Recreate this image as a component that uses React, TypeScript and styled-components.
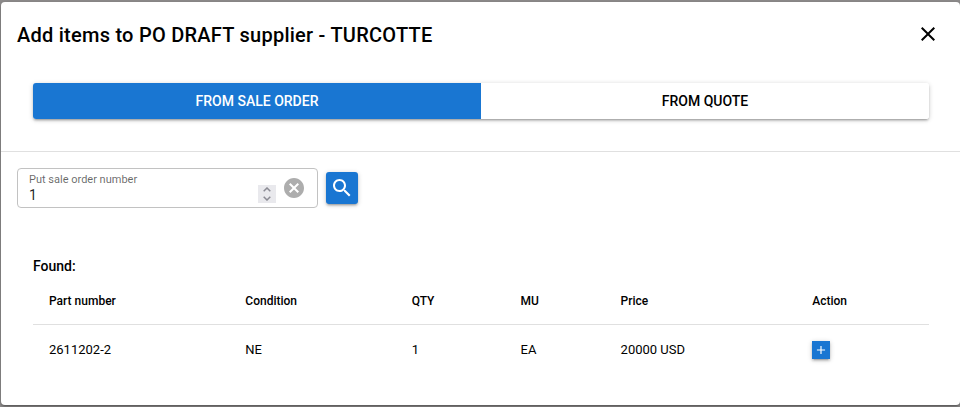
import React, { useRef, useState } from "react";
import styled, { createGlobalStyle } from "styled-components";

const PRIMARY = "#1976d2";
const SHADOW =
  "0 1px 5px rgba(0, 0, 0, 0.2), 0 2px 2px rgba(0, 0, 0, 0.14), 0 3px 1px -2px rgba(0, 0, 0, 0.12)";

const GlobalStyle = createGlobalStyle`
  *, *::before, *::after { box-sizing: border-box; }
  body {
    margin: 0;
    background: #8f8d8d;
    color: #000;
    font-family: Roboto, "Liberation Sans", sans-serif;
    font-size: 14px;
    line-height: 21px;
  }
  button, input { font: inherit; color: inherit; }
  button { border: 0; padding: 0; background: none; cursor: pointer; }
  svg { display: block; }
`;

const Backdrop = styled.div`
  padding: 2px 0 2px 1px;
`;

const Dialog = styled.section`
  background: #fff;
  border-radius: 4px;
  box-shadow: ${SHADOW};
`;

const Header = styled.header`
  display: flex;
  align-items: center;
  justify-content: space-between;
  padding: 16px 20px 16px 16px;
`;

const Title = styled.h1`
  margin: 0;
  padding-top: 2px;
  font-size: 20px;
  font-weight: 500;
  line-height: 30px;
  letter-spacing: 0.0125em;
`;

const CloseButton = styled.button`
  display: grid;
  place-items: center;
  width: 24px;
  height: 24px;
`;

const ToggleSection = styled.div`
  padding: 17px 31px 32px 32px;
  border-bottom: 1px solid #e0e0e0;
`;

const ToggleGroup = styled.div`
  display: flex;
  border-radius: 3px;
  box-shadow: ${SHADOW};
`;

const ToggleButton = styled.button<{ $active: boolean }>`
  flex: 1;
  height: 36px;
  font-weight: 500;
  text-transform: uppercase;
  background: ${({ $active }) => ($active ? PRIMARY : "#fff")};
  color: ${({ $active }) => ($active ? "#fff" : "#000")};

  &:first-child { border-radius: 3px 0 0 3px; }
  &:last-child { border-radius: 0 3px 3px 0; }
`;

const SearchForm = styled.form`
  display: flex;
  align-items: center;
  gap: 8px;
  padding: 16px;
`;

const Field = styled.div`
  display: flex;
  align-items: center;
  width: 301px;
  height: 40px;
  padding: 0 13px 0 11px;
  border: 1px solid #c2c2c2;
  border-radius: 4px;
`;

const FieldText = styled.div`
  flex: 1;
  min-width: 0;
`;

const FieldLabel = styled.label`
  display: block;
  font-size: 11px;
  line-height: 14px;
  color: rgba(0, 0, 0, 0.6);
`;

const NumberInput = styled.input`
  display: block;
  width: 100%;
  height: 16px;
  padding: 0;
  border: 0;
  outline: 0;
  background: none;
  color: rgba(0, 0, 0, 0.87);
  line-height: 16px;
  appearance: textfield;

  &::-webkit-inner-spin-button { appearance: none; margin: 0; }
`;

const Stepper = styled.div`
  display: flex;
  flex-direction: column;
  align-self: flex-end;
  margin: 0 8px 4px 0;
  background: #e9e9ed;
`;

const StepButton = styled.button`
  display: grid;
  place-items: center;
  width: 18px;
  height: 9px;
`;

const ClearButton = styled.button`
  width: 20px;
  height: 20px;
`;

const SearchButton = styled.button`
  display: grid;
  place-items: center;
  width: 32px;
  height: 32px;
  border-radius: 3px;
  background: ${PRIMARY};
  color: #fff;
  box-shadow: ${SHADOW};
`;

const Results = styled.div`
  padding: 32px 31px 31px 32px;
`;

const ResultsTitle = styled.h2`
  margin: 0;
  font-size: 14px;
  font-weight: 500;
  line-height: 20px;
`;

const Table = styled.table`
  width: 100%;
  border-collapse: separate;
  border-spacing: 0;
`;

const HeadCell = styled.th`
  height: 49px;
  padding: 2px 16px 0;
  border-bottom: 1px solid #e0e0e0;
  font-size: 12px;
  font-weight: 500;
  text-align: left;
`;

const Cell = styled.td`
  height: 49px;
  padding: 0 16px;
  font-size: 13px;
`;

const AddButton = styled.button`
  display: grid;
  place-items: center;
  width: 18px;
  height: 18px;
  background: ${PRIMARY};
  color: #fff;
  box-shadow: ${SHADOW};
`;

const columns = ["Part number", "Condition", "QTY", "MU", "Price", "Action"];
const items = [
  { part: "2611202-2", condition: "NE", qty: 1, unit: "EA", price: "20000 USD" },
];
const sources = ["From sale order", "From quote"];

export default function App() {
  const [source, setSource] = useState(sources[0]);
  const [order, setOrder] = useState("1");
  const inputRef = useRef<HTMLInputElement>(null);
  const step = (delta: number) => setOrder(String(Number(order) + delta));

  return (
    <>
      <GlobalStyle />
      <Backdrop>
        <Dialog role="dialog" aria-labelledby="dialog-title">
          <Header>
            <Title id="dialog-title">Add items to PO DRAFT supplier - TURCOTTE</Title>
            <CloseButton type="button" aria-label="Close">
              <svg width="24" height="24" viewBox="0 0 24 24" fill="currentColor">
                <path d="M19 6.41 17.59 5 12 10.59 6.41 5 5 6.41 10.59 12 5 17.59 6.41 19 12 13.41 17.59 19 19 17.59 13.41 12z" />
              </svg>
            </CloseButton>
          </Header>

          <ToggleSection>
            <ToggleGroup role="group" aria-label="Source">
              {sources.map((name) => (
                <ToggleButton
                  key={name}
                  type="button"
                  $active={name === source}
                  aria-pressed={name === source}
                  onClick={() => setSource(name)}
                >
                  {name}
                </ToggleButton>
              ))}
            </ToggleGroup>
          </ToggleSection>

          <SearchForm onSubmit={(event) => event.preventDefault()}>
            <Field>
              <FieldText>
                <FieldLabel htmlFor="order-number">Put sale order number</FieldLabel>
                <NumberInput
                  id="order-number"
                  ref={inputRef}
                  type="number"
                  value={order}
                  onChange={(event) => setOrder(event.target.value)}
                />
              </FieldText>
              <Stepper>
                <StepButton type="button" aria-label="Increase" onClick={() => step(1)}>
                  <svg width="8" height="5" viewBox="0 0 8 5" fill="none" stroke="#8b8b94" strokeWidth="1.5">
                    <path d="M.7 4.3 4 1l3.3 3.3" />
                  </svg>
                </StepButton>
                <StepButton type="button" aria-label="Decrease" onClick={() => step(-1)}>
                  <svg width="8" height="5" viewBox="0 0 8 5" fill="none" stroke="#8b8b94" strokeWidth="1.5">
                    <path d="M.7.7 4 4 7.3.7" />
                  </svg>
                </StepButton>
              </Stepper>
              <ClearButton
                type="button"
                aria-label="Clear"
                onClick={() => {
                  setOrder("");
                  inputRef.current?.focus();
                }}
              >
                <svg width="20" height="20" viewBox="2 2 20 20" fill="#adadad">
                  <path d="M12 2C6.47 2 2 6.47 2 12s4.47 10 10 10 10-4.47 10-10S17.53 2 12 2zm5 13.59L15.59 17 12 13.41 8.41 17 7 15.59 10.59 12 7 8.41 8.41 7 12 10.59 15.59 7 17 8.41 13.41 12 17 15.59z" />
                </svg>
              </ClearButton>
            </Field>
            <SearchButton type="submit" aria-label="Search">
              <svg width="24" height="24" viewBox="0 0 24 24" fill="currentColor">
                <path d="M15.5 14h-.79l-.28-.27C15.41 12.59 16 11.11 16 9.5 16 5.91 13.09 3 9.5 3S3 5.91 3 9.5 5.91 16 9.5 16c1.61 0 3.09-.59 4.23-1.57l.27.28v.79l5 4.99L20.49 19l-4.99-5zm-6 0C7.01 14 5 11.99 5 9.5S7.01 5 9.5 5 14 7.01 14 9.5 11.99 14 9.5 14z" />
              </svg>
            </SearchButton>
          </SearchForm>

          <Results>
            <ResultsTitle id="results-title">Found:</ResultsTitle>
            <Table aria-labelledby="results-title">
              <thead>
                <tr>
                  {columns.map((name) => (
                    <HeadCell key={name} scope="col">{name}</HeadCell>
                  ))}
                </tr>
              </thead>
              <tbody>
                {items.map((item) => (
                  <tr key={item.part}>
                    <Cell>{item.part}</Cell>
                    <Cell>{item.condition}</Cell>
                    <Cell>{item.qty}</Cell>
                    <Cell>{item.unit}</Cell>
                    <Cell>{item.price}</Cell>
                    <Cell>
                      <AddButton type="button" aria-label={`Add ${item.part}`}>
                        <svg width="14" height="14" viewBox="0 0 24 24" fill="currentColor">
                          <path d="M19 13h-6v6h-2v-6H5v-2h6V5h2v6h6v2z" />
                        </svg>
                      </AddButton>
                    </Cell>
                  </tr>
                ))}
              </tbody>
            </Table>
          </Results>
        </Dialog>
      </Backdrop>
    </>
  );
}
